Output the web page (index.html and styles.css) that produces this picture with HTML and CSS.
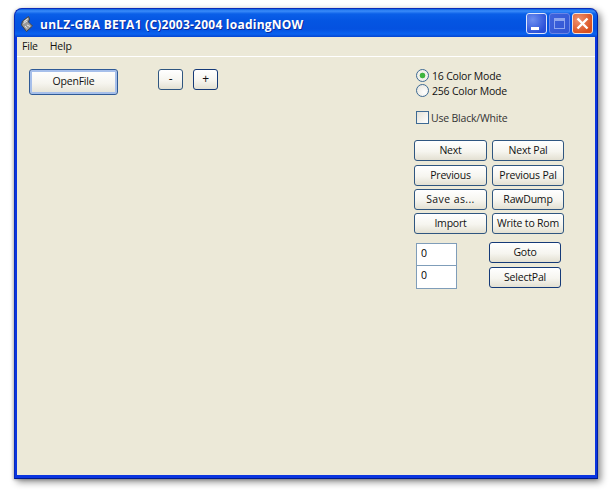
FILE: index.html
```html
<!DOCTYPE html>
<html lang="en">
<head>
<meta charset="utf-8">
<title>unLZ-GBA</title>
<link rel="stylesheet" href="styles.css">
</head>
<body>
<div class="window">
  <div class="titlebar">
    <svg class="app-icon" width="12" height="16" viewBox="0 0 12 16">
      <path d="M7.5 .5 L1.5 5 L.5 9 L5.5 15.5 L11.5 10 L7.5 6 L8.5 3 Z" fill="#9a9a9a" stroke="#444" stroke-width="1"/>
      <path d="M3 5.5 L7 2.5 M2.5 7.5 L6 5 M6 9 L9 10.5 M4 10 L6 12.5" stroke="#e8e8e8" stroke-width="1" fill="none"/>
    </svg>
    <span class="title">unLZ-GBA BETA1 (C)2003-2004 loadingNOW</span>
    <div class="controls">
      <span class="ctl ctl-min"><span class="min-glyph"></span></span>
      <span class="ctl ctl-max"><span class="max-glyph"></span></span>
      <span class="ctl ctl-close">
        <svg width="15" height="15" viewBox="0 0 15 15"><path d="M2.5 2.5 L12.5 12.5 M12.5 2.5 L2.5 12.5" stroke="#fff" stroke-width="2.4"/></svg>
      </span>
    </div>
  </div>
  <div class="client">
    <div class="menubar">
      <span class="menu-item">File</span>
      <span class="menu-item">Help</span>
    </div>
    <div class="content">
      <div class="left">
        <button class="btn btn-default btn-open">OpenFile</button>
        <button class="btn btn-small">-</button>
        <button class="btn btn-small btn-dark">+</button>
      </div>
      <div class="right">
        <div class="option"><span class="radio checked"></span><span class="label">16 Color Mode</span></div>
        <div class="option"><span class="radio"></span><span class="label">256 Color Mode</span></div>
        <div class="option check-row"><span class="check"></span><span class="label label-check">Use Black/White</span></div>
        <div class="btn-grid">
          <button class="btn">Next</button>
          <button class="btn">Next Pal</button>
          <button class="btn">Previous</button>
          <button class="btn">Previous Pal</button>
          <button class="btn btn-wide">Save as...</button>
          <button class="btn">RawDump</button>
          <button class="btn">Import</button>
          <button class="btn">Write to Rom</button>
        </div>
        <div class="goto-row">
          <div class="fields">
            <div class="field">0</div>
            <div class="field field-second">0</div>
          </div>
          <div class="goto-btns">
            <button class="btn btn-dark">Goto</button>
            <button class="btn btn-dark">SelectPal</button>
          </div>
        </div>
      </div>
    </div>
  </div>
</div>
</body>
</html>
```
FILE: styles.css
```css
* { box-sizing: border-box; }
html, body { margin: 0; padding: 0; background: #fff; }
body { width: 612px; height: 499px; padding: 8px 0 0 14px; font-family: "Open Sans", "DejaVu Sans", sans-serif; font-size: 10.5px; letter-spacing: -.2px; color: #111; overflow: hidden; }

.window {
  width: 584px; height: 471px;
  display: flex; flex-direction: column;
  background: #0a35e0;
  border-radius: 8px 8px 0 0;
  box-shadow: 3px 3px 7px rgba(0,0,0,.45), -1px 1px 3px rgba(0,0,0,.2);
  border: 1px solid #0a2bb8;
  border-bottom-color: #001a8c;
  border-right-color: #001ea0;
}
.titlebar {
  height: 28px; flex: none;
  display: flex; align-items: center;
  padding: 0 4px 0 6px;
  border-radius: 7px 7px 0 0;
  background: linear-gradient(#0a5fe0 0, #3b8dfa 2px, #0a5fe8 5px, #0455e2 12px, #0451e0 20px, #0a63f0 25px, #0545d0 28px);
  color: #fff;
}
.app-icon { flex: none; margin-right: 7px; margin-top: 1px; }
.title { font-weight: bold; font-size: 12px; letter-spacing: .24px; white-space: nowrap; text-shadow: 1px 1px 0 #0a2a9c; padding-top: 2px; }
.controls { margin-left: auto; display: flex; gap: 2px; margin-top: 1px; }
.ctl { width: 21px; height: 21px; border: 1px solid #fff; border-radius: 3px; display: flex; position: relative; }
.ctl-min { background: radial-gradient(circle at 30% 30%, #6d8ff0, #2a50d8 75%); border-color: #dfe7fb; }
.ctl-max { background: linear-gradient(135deg, #3f63dc, #3155d4); border-color: #6a86e6; }
.ctl-close { background: radial-gradient(circle at 30% 30%, #ee9270, #d9501e 75%); border-color: #f2e2d8; align-items: center; justify-content: center; }
.min-glyph { position: absolute; left: 4px; bottom: 3px; width: 8px; height: 3px; background: #fff; }
.max-glyph { position: absolute; left: 4px; top: 4px; width: 11px; height: 11px; border: 1px solid #8ea5ee; border-top-width: 3px; }

.client {
  flex: 1; margin: 0 2px 3px; background: #ece9d8;
  display: flex; flex-direction: column; min-height: 0;
}
.menubar { height: 20px; flex: none; display: flex; gap: 12px; padding: 0 0 1px 5px; align-items: center; border-bottom: 1px solid #fff; }
.content { flex: 1; display: flex; justify-content: space-between; }

.btn {
  font: inherit; letter-spacing: inherit; color: #111; padding: 0 0 2px; margin: 0;
  height: 21px; width: 100%;
  border: 1px solid #2f5680; border-radius: 3px;
  background: linear-gradient(#fff, #f6f5ef 55%, #e3e0d2);
  display: block;
}
.btn-default { border-color: #2f5a96; box-shadow: inset 0 0 0 2px #a6bfea; }
.btn-dark { border-color: #153a78; }
.btn-wide { letter-spacing: .4px; }
.left { display: flex; align-items: flex-start; padding: 12px 0 0 12px; }
.btn-open { width: 89px; height: 26px; margin-right: 40px; }
.btn-small { width: 25px; margin-right: 10px; font-size: 12px; }

.right { width: 181px; padding: 12px 0 0; }
.option { display: flex; align-items: center; height: 13px; margin: 0 0 2px 2px; }
.radio {
  width: 13px; height: 13px; border-radius: 50%; flex: none;
  border: 1px solid #3d6a94;
  background: radial-gradient(circle at 65% 65%, #fff, #e4e2d8);
}
.radio.checked { background: radial-gradient(circle, #3fb53f 0 2.5px, #f2f1ea 3.2px); }
.label { margin-left: 3px; white-space: nowrap; }
.check-row { margin-top: 14px; }
.check { width: 13px; height: 13px; flex: none; border: 1px solid #3d6a94; background: linear-gradient(135deg, #e4e2d8, #fff); }
.label-check { margin-left: 2px; color: #333; }

.btn-grid { display: grid; grid-template-columns: 73px 72px; grid-template-rows: 22px repeat(3, 21px); align-items: start; column-gap: 5px; row-gap: 3px; margin-top: 16px; }
.goto-row { display: flex; margin-top: 8px; padding-left: 2px; }
.fields { width: 41px; margin-top: 1px; }
.field { height: 23px; border: 1px solid #7f9db9; background: #fff; padding: 2px 0 0 4px; color: #000; }
.field-second { margin-top: -1px; height: 24px; }
.goto-btns { width: 72px; margin-left: 32px; display: flex; flex-direction: column; gap: 4px; }
```
